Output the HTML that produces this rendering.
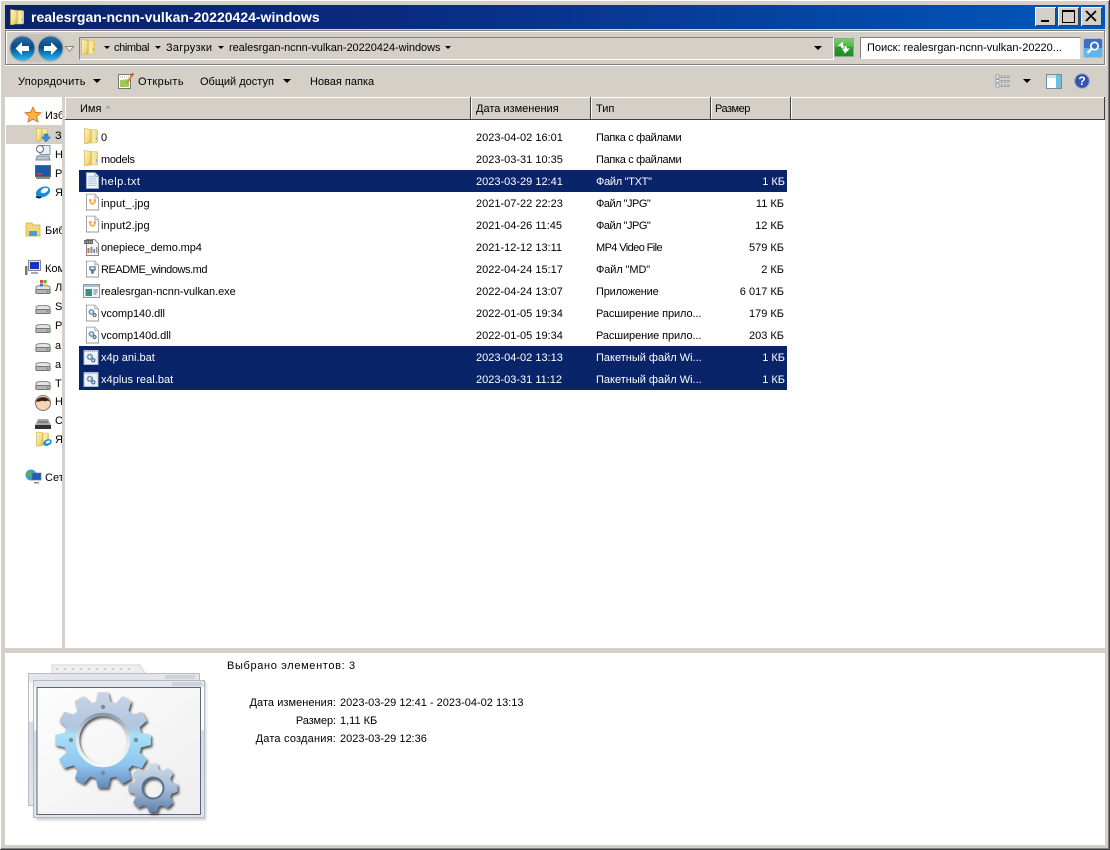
<!DOCTYPE html>
<html><head><meta charset="utf-8"><style>
html,body{margin:0;padding:0}
body{width:1110px;height:850px;overflow:hidden;position:relative;background:#d4d0c8;font:11px "Liberation Sans","Noto Sans CJK JP",sans-serif;color:#000}
.a{position:absolute;white-space:nowrap}
.t{position:absolute;white-space:nowrap;line-height:14px;height:14px;margin-top:1px}
.btn{position:absolute;top:7px;width:21px;height:19px;background:#d4d0c8;box-shadow:inset 1px 1px 0 #fff,inset -1px -1px 0 #404040}
.sel{position:absolute;left:79px;width:708px;height:22px;background:#0a246a}
.w{color:#fff}
.arr{position:absolute;width:0;height:0;border-left:4px solid transparent;border-right:4px solid transparent;border-top:4px solid #000}
.sep{position:absolute;top:97px;width:1px;height:22px;background:#404040;box-shadow:1px 0 0 #fff}
svg{position:absolute;overflow:visible}
</style></head><body>
<svg width="0" height="0" style="position:absolute"><defs>
<linearGradient id="fg" x1="0" y1="0" x2="1" y2="0"><stop offset="0" stop-color="#d8b548"/><stop offset="0.5" stop-color="#fbeeb0"/><stop offset="1" stop-color="#e8d070"/></linearGradient>
<linearGradient id="ff" x1="0" y1="0" x2="1" y2="1"><stop offset="0" stop-color="#fff4b8"/><stop offset="0.6" stop-color="#f1dc86"/><stop offset="1" stop-color="#d9b84e"/></linearGradient>
<linearGradient id="bg" x1="0" y1="0" x2="0" y2="1"><stop offset="0" stop-color="#2a6fa8"/><stop offset="0.45" stop-color="#0a4a85"/><stop offset="0.75" stop-color="#1488cf"/><stop offset="1" stop-color="#33bdf0"/></linearGradient>
<linearGradient id="gear" gradientUnits="userSpaceOnUse" x1="0" y1="52" x2="0" y2="150"><stop offset="0" stop-color="#c9d4e2"/><stop offset="0.36" stop-color="#afc6e0"/><stop offset="0.44" stop-color="#a6e0f6"/><stop offset="0.75" stop-color="#8fc4ee"/><stop offset="1" stop-color="#5f84b6"/></linearGradient>
<linearGradient id="gear2" gradientUnits="userSpaceOnUse" x1="0" y1="123" x2="0" y2="173"><stop offset="0" stop-color="#d2dbe6"/><stop offset="0.5" stop-color="#a6bcd6"/><stop offset="1" stop-color="#5e80aa"/></linearGradient>
<linearGradient id="ring" x1="0" y1="0" x2="0" y2="1"><stop offset="0" stop-color="#8d9aaa"/><stop offset="0.5" stop-color="#dfe8ee"/><stop offset="1" stop-color="#f4f8fa"/></linearGradient>
<linearGradient id="greenb" x1="0" y1="0" x2="0" y2="1"><stop offset="0" stop-color="#7ad070"/><stop offset="0.45" stop-color="#4cb546"/><stop offset="0.5" stop-color="#2c9a2c"/><stop offset="1" stop-color="#1f8a26"/></linearGradient>
<symbol id="folder" viewBox="0 0 14 16"><path d="M6 1.500h7l.7 1v11.500l-.7 1H5z" fill="url(#fg)" stroke="#d9c26a" stroke-width=".5"/><path d="M.5 .5l6.500 1v12.500l-4.500 2-2-.5z" fill="url(#ff)" stroke="#c9aa44" stroke-width=".6"/><path d="M12.500 9v3" stroke="#8ab4d8"/></symbol>
<symbol id="page" viewBox="0 0 16 18"><path d="M1.500 .5h9l4 4v13h-13z" fill="#fff" stroke="#999"/><path d="M10.500 .5v4h4" fill="#e5e5e5" stroke="#aaa"/></symbol>
<symbol id="txt" viewBox="0 0 16 18"><path d="M1.500 .5h9l4 4v13h-13z" fill="#f3f7fc" stroke="#8fa3bb"/><path d="M10.500 .5v4h4" fill="#d9e2ee" stroke="#8fa3bb"/><path d="M3.500 4.500h6M3.500 6.500h9M3.500 8.500h9M3.500 10.500h9M3.500 12.500h9M3.500 14.500h9" stroke="#a5bdd8"/></symbol>
<symbol id="jpg" viewBox="0 0 16 18"><use href="#page" width="16" height="18"/><path d="M4 7c1.500-1.500 2.500-.5 4 0 1.500-.5 2.500-1.500 4 0-.5 3-2.300 5-4 5s-3.500-2-4-5z" fill="#f4b04a"/><circle cx="8" cy="8.500" r="1.600" fill="#fff3d8"/><path d="M5 6l1 1M11 6l-1 1" stroke="#e2705c"/></symbol>
<symbol id="mp4" viewBox="0 0 16 18"><path d="M2.500 1.500h8l4 4v12h-12z" fill="#f4f4f4" stroke="#888"/><path d="M0 2h9v4H0z" fill="#666"/><path d="M1 4h1M3 4h1M5 4h1M7 4h1" stroke="#ddd"/><path d="M3.500 10h2v5h-2z" fill="#d66"/><path d="M6.500 9h2v6h-2z" fill="#6a6"/><path d="M9.500 11h1.500v4H9.500z" fill="#66c"/><path d="M12 9h1.500v6H12z" fill="#999"/></symbol>
<symbol id="md" viewBox="0 0 16 18"><use href="#page" width="16" height="18"/><path d="M4.500 6h7v4l-2 1.500v2l-1.500 1-1.500-1v-2l-2-1.500z" fill="#5f7f9c"/><rect x="6" y="7.200" width="4" height="2" fill="#dbe6f0"/></symbol>
<symbol id="exe" viewBox="0 0 17 14"><rect x=".5" y=".5" width="16" height="13" fill="#f4f7fa" stroke="#8a98a8"/><rect x="1" y="1" width="15" height="2" fill="#aebfd0"/><rect x="2.500" y="5" width="6.500" height="7" fill="#3f8f80"/><path d="M10.500 6h4M10.500 8h4M10.500 10h3" stroke="#5a7d9a"/><path d="M14 5v1" stroke="#6a8"/></symbol>
<symbol id="gears" viewBox="0 0 16 16"><circle cx="6.500" cy="6.500" r="3.100" fill="#dce8f2" stroke="#5f88b0" stroke-width="2.200" stroke-dasharray="2.300 .5"/><circle cx="11" cy="11" r="2.100" fill="#eef4f8" stroke="#4f7298" stroke-width="1.700"/></symbol>
<symbol id="dll" viewBox="0 0 16 18"><use href="#page" width="16" height="18"/><use href="#gears" x="2" y="3" width="12" height="12"/></symbol>
<symbol id="bat" viewBox="0 0 16 16"><rect x=".5" y=".5" width="15" height="15" fill="#eef2f7" stroke="#a8b8c8"/><path d="M1 1.500h14" stroke="#8898aa" stroke-dasharray="1 1"/><use href="#gears" x="1.500" y="2" width="13" height="13"/></symbol>
<symbol id="drive" viewBox="0 0 16 16"><path d="M1 6.500C1 5 3 4.500 8 4.500s7 .5 7 2V10H1z" fill="#e4e4e4" stroke="#888"/><rect x=".8" y="8.500" width="14.400" height="4" rx="1" fill="#b4b4b4" stroke="#777"/><rect x="11.500" y="9.500" width="2" height="2" fill="#58b04a"/></symbol>
</defs></svg>

<!-- outer frame -->
<div class="a" style="left:0;top:0;width:1110px;height:1px;background:#fff"></div>
<div class="a" style="left:0;top:0;width:1px;height:850px;background:#fff"></div>
<div class="a" style="left:1109px;top:0;width:1px;height:850px;background:#404040"></div>
<div class="a" style="left:0;top:849px;width:1110px;height:1px;background:#404040"></div>
<div class="a" style="left:1108px;top:1px;width:1px;height:848px;background:#808080"></div>
<div class="a" style="left:1px;top:848px;width:1108px;height:1px;background:#808080"></div>

<!-- title -->
<div class="a" style="left:5px;top:5px;width:1100px;height:24px;background:linear-gradient(90deg,#0a246a 0%,#0a2a80 35%,#0058bc 100%)"></div>
<svg style="left:10px;top:9px" width="14" height="16"><use href="#folder" width="14" height="16"/></svg>
<div class="t" style="left:31px;top:9px;color:#fff;font-weight:bold;font-size:14px;line-height:15px;height:15px">realesrgan-ncnn-vulkan-20220424-windows</div>
<div class="btn" style="left:1035px"><div class="a" style="left:6px;top:13px;width:8px;height:2px;background:#000"></div></div>
<div class="btn" style="left:1058px"><div class="a" style="left:4px;top:3px;width:11px;height:10px;border:1px solid #000;border-top-width:2px"></div></div>
<div class="btn" style="left:1081px"><svg style="left:5px;top:4px" width="11" height="11"><path d="M0 0l10 10M10 0L0 10" stroke="#000" stroke-width="1.700"/></svg></div>

<!-- nav bar -->
<div class="a" style="left:5px;top:30px;width:1098px;height:33px;border:1px solid #808080;box-shadow:inset 1px 1px 0 #fff,1px 1px 0 #fff"></div>
<div class="a" style="left:9px;top:34px;width:56px;height:28px;border-radius:14px;background:#c6c2ba"></div>
<svg style="left:9px;top:35px" width="27" height="27"><circle cx="13.500" cy="13.500" r="12.500" fill="url(#bg)" stroke="#a8adb3"/><path d="M13 7l-6.500 6.500 6.500 6.500v-4h7v-5h-7z" fill="#fff"/></svg>
<svg style="left:37px;top:35px" width="27" height="27"><circle cx="13.500" cy="13.500" r="12.500" fill="url(#bg)" stroke="#a8adb3"/><path d="M14 7l6.500 6.500L14 20v-4H7v-5h7z" fill="#fff"/></svg>
<svg style="left:65px;top:46px" width="10" height="7"><path d="M.5 .5h8L4.500 5.500z" fill="#f2f2f2" stroke="#888"/></svg>
<div class="a" style="left:79px;top:37px;width:753px;height:21px;border:1px solid #808080;border-right-color:#fff;border-bottom-color:#fff"></div>
<svg style="left:81px;top:39px" width="14" height="16"><use href="#folder" width="14" height="16"/></svg>
<div class="arr" style="left:104px;top:46px;border-width:3px 3px 0"></div>
<div class="t" style="left:114px;top:40px;letter-spacing:-.4px">chimbal</div>
<div class="arr" style="left:155px;top:46px;border-width:3px 3px 0"></div>
<div class="t" style="left:166px;top:40px;letter-spacing:.25px">Загрузки</div>
<div class="arr" style="left:218px;top:46px;border-width:3px 3px 0"></div>
<div class="t" style="left:229px;top:40px;letter-spacing:-.05px">realesrgan-ncnn-vulkan-20220424-windows</div>
<div class="arr" style="left:445px;top:46px;border-width:3px 3px 0"></div>
<div class="arr" style="left:814px;top:46px"></div>
<svg style="left:834px;top:38px" width="20" height="19"><rect x=".5" y=".5" width="19" height="18" fill="url(#greenb)" stroke="#8aa88a"/><path d="M9 3.500L3.500 8H7v1.500c1 .5 2 .5 3 0V8h-1zM11 15.500l5-5h-3.200V8.500l-2.300-.5v2.500H8z" fill="#fff"/></svg>
<div class="a" style="left:860px;top:37px;width:219px;height:20px;background:#fff;border:1px solid #808080;border-right-color:#d4d0c8;border-bottom-color:#fff"></div>
<div class="t" style="left:867px;top:40px">Поиск: realesrgan-ncnn-vulkan-20220...</div>
<svg style="left:1083px;top:38px" width="20" height="20"><rect x=".5" y=".5" width="19" height="19" rx="2" fill="#3c70c8" stroke="#b0bdd0"/><rect x="1" y="10" width="18" height="9" fill="#62b4ea"/><circle cx="11.500" cy="8" r="3.700" fill="#3c70c8" stroke="#fff" stroke-width="1.700"/><path d="M8.500 11l-4 4" stroke="#fff" stroke-width="2.200"/></svg>

<!-- toolbar -->
<div class="a" style="left:5px;top:65px;width:1100px;height:1px;background:#fff"></div>
<div class="t" style="left:18px;top:74px;letter-spacing:.2px">Упорядочить</div>
<div class="arr" style="left:93px;top:79px"></div>
<svg style="left:117px;top:72px" width="18" height="18"><path d="M1.500 2.500h12v14h-12z" fill="#fff" stroke="#777"/><path d="M3 8l9-1v8H3z" fill="#9ccb58"/><path d="M3 5h9" stroke="#a0a0a0" stroke-dasharray="1 1"/><path d="M10 11l6-9" stroke="#d98a1e" stroke-width="2"/><path d="M15 3l1-1.500" stroke="#c02020" stroke-width="2"/></svg>
<div class="t" style="left:138px;top:74px;letter-spacing:.4px">Открыть</div>
<div class="t" style="left:200px;top:74px">Общий доступ</div>
<div class="arr" style="left:283px;top:79px"></div>
<div class="t" style="left:310px;top:74px">Новая папка</div>
<svg style="left:995px;top:74px" width="16" height="14"><path d="M1 1h3v3H1zM1 5.500h3v3H1zM1 10h3v3H1z" fill="#fff" stroke="#7d8da0" stroke-width=".8"/><path d="M5.500 2h10M5.500 3.500h10M5.500 6.500h10M5.500 8h10M5.500 11h10M5.500 12.500h10" stroke="#7f8a9c" stroke-width=".8" stroke-dasharray="2.500 .8"/></svg>
<div class="arr" style="left:1023px;top:79px"></div>
<svg style="left:1046px;top:74px" width="16" height="15"><rect x=".5" y=".5" width="15" height="14" fill="#fff" stroke="#6f8ca8"/><rect x="1" y="1" width="14" height="3" fill="#cfe0ee"/><rect x="10" y="1" width="5" height="13" fill="#6cc0dc"/></svg>
<svg style="left:1074px;top:73px" width="16" height="16"><circle cx="8" cy="8" r="7.300" fill="#2f55b0" stroke="#9aa6b8"/><text x="8" y="12" text-anchor="middle" font-family="Liberation Sans" font-size="12" font-weight="bold" fill="#fff">?</text></svg>

<!-- nav pane -->
<div class="a" style="left:5px;top:97px;width:57px;height:551px;background:#fff;overflow:hidden">
  <div class="a" style="left:1px;top:28px;width:56px;height:19px;background:#d4d0c8"></div>
  <svg style="left:20px;top:10px" width="16" height="16"><path d="M8 0l2.300 5.200 5.700.6-4.300 3.700 1.300 5.500L8 12.100 3 15l1.300-5.500L0 5.800l5.700-.6z" fill="#f6b73c" stroke="#d9672a" stroke-width=".8"/></svg>
  <div class="t" style="left:40px;top:11px">Избранное</div>
  <svg style="left:31px;top:30px" width="16" height="17"><use href="#folder" width="12" height="15"/><path d="M8 7h4v3h2.500L10 15 5.500 10H8z" fill="#3b8fd8" stroke="#1d5fa8" stroke-width=".5"/></svg>
  <div class="t" style="left:50px;top:31px">Загрузки</div>
  <svg style="left:30px;top:48px" width="16" height="16"><rect x="5" y=".5" width="10" height="9" fill="#e8eef4" stroke="#8796a6"/><circle cx="5" cy="4" r="3.500" fill="#fff" stroke="#667"/><path d="M2 11h12l1 4H1z" fill="#b9c6d2" stroke="#7d8a98"/></svg>
  <div class="t" style="left:50px;top:50px">Недавние места</div>
  <svg style="left:30px;top:67px" width="16" height="16"><rect x=".5" y="1.500" width="15" height="11" fill="#1c5aa8" stroke="#666"/><rect x="2" y="9" width="5" height="2" fill="#d33"/><rect x="1" y="13" width="14" height="2" fill="#8b8b8b"/></svg>
  <div class="t" style="left:50px;top:69px">Рабочий стол</div>
  <svg style="left:30px;top:87px" width="16" height="16"><ellipse cx="8" cy="8" rx="7.500" ry="5" transform="rotate(-25 8 8)" fill="#1b8be0"/><ellipse cx="9.500" cy="6.500" rx="4" ry="2.300" transform="rotate(-25 9.500 6.500)" fill="#fff"/><path d="M1 12.500q3 2 5 .5" stroke="#111" stroke-width="1.500" fill="none"/></svg>
  <div class="t" style="left:50px;top:88px">Яндекс.Диск</div>
  <svg style="left:20px;top:125px" width="17" height="16"><path d="M1 1h6l1 2h7v11H1z" fill="#f2d878" stroke="#c9a93a" stroke-width=".7"/><path d="M4 14V9h8v5z" fill="#4f9bd8"/></svg>
  <div class="t" style="left:40px;top:126px">Библиотеки</div>
  <svg style="left:20px;top:163px" width="16" height="16"><rect x="3.500" y=".5" width="12" height="10" fill="#e8e8ee" stroke="#888"/><rect x="5" y="2" width="9" height="7" fill="#1536b8"/><rect x="0" y="6" width="2.500" height="9" fill="#777"/><path d="M6 12h7v2H6z" fill="#aaa"/></svg>
  <div class="t" style="left:40px;top:164px">Компьютер</div>
  <svg style="left:30px;top:182px" width="16" height="16"><use href="#drive" width="16" height="16" y="2"/><path d="M5 1h3v3H5z" fill="#e04a2a"/><path d="M8.500 1h3v3h-3z" fill="#5aab3a"/><path d="M5 4.500h3v3H5z" fill="#3a78d8"/><path d="M8.500 4.500h3v3h-3z" fill="#f0c030"/></svg>
  <div class="t" style="left:50px;top:183px">Локальный</div>
  <svg style="left:30px;top:204px" width="16" height="16"><use href="#drive" width="16" height="16"/></svg>
  <div class="t" style="left:50px;top:202px">S</div>
  <svg style="left:30px;top:223px" width="16" height="16"><use href="#drive" width="16" height="16"/></svg>
  <div class="t" style="left:50px;top:221px">Р</div>
  <svg style="left:30px;top:242px" width="16" height="16"><use href="#drive" width="16" height="16"/></svg>
  <div class="t" style="left:50px;top:241px">а</div>
  <svg style="left:30px;top:261px" width="16" height="16"><use href="#drive" width="16" height="16"/></svg>
  <div class="t" style="left:50px;top:260px">а</div>
  <svg style="left:30px;top:280px" width="16" height="16"><use href="#drive" width="16" height="16"/></svg>
  <div class="t" style="left:50px;top:279px">Т</div>
  <svg style="left:30px;top:298px" width="16" height="16"><circle cx="8" cy="8" r="7.500" fill="#f5d7b5" stroke="#777"/><path d="M1 7C2 1 13 0 15 7c-2-2-3-1-4-1-2 1-3-1-5 0-2 1-3 0-5 1z" fill="#3a1f14"/></svg>
  <div class="t" style="left:50px;top:297px">Н</div>
  <svg style="left:30px;top:317px" width="16" height="16"><path d="M3 5h10l3 6v4H0v-4z" fill="#aaa"/><path d="M0 11h16v4H0z" fill="#333"/><path d="M3 8h10" stroke="#555"/></svg>
  <div class="t" style="left:50px;top:316px">С</div>
  <svg style="left:31px;top:334px" width="17" height="17"><use href="#folder" width="13" height="16"/><ellipse cx="11.500" cy="11.500" rx="4.500" ry="3" transform="rotate(-25 11.500 11.500)" fill="#1b8be0"/><ellipse cx="12" cy="11" rx="2.300" ry="1.200" transform="rotate(-25 12 11)" fill="#fff"/></svg>
  <div class="t" style="left:50px;top:335px">Я</div>
  <svg style="left:20px;top:372px" width="17" height="16"><circle cx="6" cy="6" r="5.500" fill="#3aa0d8"/><path d="M2 3q3-2 4 1t-3 4z" fill="#5ab04a"/><rect x="7" y="4" width="9" height="7" fill="#1f5ec0" stroke="#777" stroke-width=".7"/><path d="M9 13h5v1.500H9z" fill="#888"/></svg>
  <div class="t" style="left:40px;top:373px">Сеть</div>
</div>

<!-- header -->
<div class="a" style="left:65px;top:97px;width:1040px;height:1px;background:#fff"></div>
<div class="a" style="left:65px;top:97px;width:1px;height:22px;background:#fff"></div>
<div class="a" style="left:65px;top:119px;width:1040px;height:1px;background:#404040"></div>
<div class="a" style="left:1104px;top:97px;width:1px;height:23px;background:#404040"></div>
<div class="sep" style="left:470px"></div><div class="sep" style="left:590px"></div><div class="sep" style="left:710px"></div><div class="sep" style="left:790px"></div>
<div class="t" style="left:80px;top:101px">Имя</div>
<svg style="left:105px;top:105px" width="6" height="4"><path d="M0 3.500L3 0l3 3.500z" fill="#a8a8a8"/></svg>
<div class="t" style="left:476px;top:101px">Дата изменения</div>
<div class="t" style="left:596px;top:101px">Тип</div>
<div class="t" style="left:715px;top:101px;letter-spacing:-.5px">Размер</div>

<!-- list -->
<div class="a" style="left:65px;top:120px;width:1040px;height:528px;background:#fff"></div>
<div class="sel" style="top:170px"></div>
<div class="sel" style="top:346px;height:44px"></div>

<svg style="left:84px;top:128px" width="14" height="16"><use href="#folder" width="14" height="16"/></svg>
<div class="t" style="left:101px;top:130px">0</div><div class="t" style="left:476px;top:130px">2023-04-02 16:01</div><div class="t" style="left:596px;top:130px;letter-spacing:-.33px">Папка с файлами</div>

<svg style="left:84px;top:150px" width="14" height="16"><use href="#folder" width="14" height="16"/></svg>
<div class="t" style="left:101px;top:152px;letter-spacing:-.3px">models</div><div class="t" style="left:476px;top:152px">2023-03-31 10:35</div><div class="t" style="left:596px;top:152px;letter-spacing:-.33px">Папка с файлами</div>

<svg style="left:85px;top:171px" width="15" height="19"><use href="#txt" width="15" height="19"/></svg>
<div class="t w" style="left:101px;top:174px;letter-spacing:.5px">help.txt</div><div class="t w" style="left:476px;top:174px">2023-03-29 12:41</div><div class="t w" style="left:596px;top:174px;letter-spacing:-.3px">Файл "TXT"</div><div class="t w" style="left:685px;width:100px;text-align:right;top:174px">1 КБ</div>

<svg style="left:85px;top:193px" width="15" height="18"><use href="#jpg" width="15" height="18"/></svg>
<div class="t" style="left:101px;top:196px;letter-spacing:.1px">input_.jpg</div><div class="t" style="left:476px;top:196px">2021-07-22 22:23</div><div class="t" style="left:596px;top:196px;letter-spacing:-.5px">Файл "JPG"</div><div class="t" style="left:684px;width:100px;text-align:right;top:196px">11 КБ</div>

<svg style="left:85px;top:215px" width="15" height="18"><use href="#jpg" width="15" height="18"/></svg>
<div class="t" style="left:101px;top:218px;letter-spacing:.1px">input2.jpg</div><div class="t" style="left:476px;top:218px">2021-04-26 11:45</div><div class="t" style="left:596px;top:218px;letter-spacing:-.5px">Файл "JPG"</div><div class="t" style="left:684px;width:100px;text-align:right;top:218px">12 КБ</div>

<svg style="left:84px;top:238px" width="16" height="18"><use href="#mp4" width="16" height="18"/></svg>
<div class="t" style="left:101px;top:240px;letter-spacing:-.12px">onepiece_demo.mp4</div><div class="t" style="left:476px;top:240px">2021-12-12 13:11</div><div class="t" style="left:596px;top:240px;letter-spacing:-.6px">MP4 Video File</div><div class="t" style="left:684px;width:100px;text-align:right;top:240px">579 КБ</div>

<svg style="left:85px;top:260px" width="15" height="18"><use href="#md" width="15" height="18"/></svg>
<div class="t" style="left:101px;top:262px;letter-spacing:-.45px">README_windows.md</div><div class="t" style="left:476px;top:262px">2022-04-24 15:17</div><div class="t" style="left:596px;top:262px;letter-spacing:-.1px">Файл "MD"</div><div class="t" style="left:684px;width:100px;text-align:right;top:262px">2 КБ</div>

<svg style="left:83px;top:284px" width="17" height="14"><use href="#exe" width="17" height="14"/></svg>
<div class="t" style="left:101px;top:284px;letter-spacing:-.04px">realesrgan-ncnn-vulkan.exe</div><div class="t" style="left:476px;top:284px">2022-04-24 13:07</div><div class="t" style="left:596px;top:284px;letter-spacing:-.2px">Приложение</div><div class="t" style="left:684px;width:100px;text-align:right;top:284px">6 017 КБ</div>

<svg style="left:85px;top:304px" width="15" height="18"><use href="#dll" width="15" height="18"/></svg>
<div class="t" style="left:101px;top:306px;letter-spacing:-.08px">vcomp140.dll</div><div class="t" style="left:476px;top:306px">2022-01-05 19:34</div><div class="t" style="left:596px;top:306px;letter-spacing:-.1px">Расширение прило...</div><div class="t" style="left:684px;width:100px;text-align:right;top:306px">179 КБ</div>

<svg style="left:85px;top:326px" width="15" height="18"><use href="#dll" width="15" height="18"/></svg>
<div class="t" style="left:101px;top:328px;letter-spacing:-.08px">vcomp140d.dll</div><div class="t" style="left:476px;top:328px">2022-01-05 19:34</div><div class="t" style="left:596px;top:328px;letter-spacing:-.1px">Расширение прило...</div><div class="t" style="left:684px;width:100px;text-align:right;top:328px">203 КБ</div>

<svg style="left:83px;top:350px" width="16" height="15"><use href="#bat" width="16" height="15"/></svg>
<div class="t w" style="left:101px;top:350px">x4p ani.bat</div><div class="t w" style="left:476px;top:350px">2023-04-02 13:13</div><div class="t w" style="left:596px;top:350px">Пакетный файл Wi...</div><div class="t w" style="left:685px;width:100px;text-align:right;top:350px">1 КБ</div>

<svg style="left:83px;top:372px" width="16" height="15"><use href="#bat" width="16" height="15"/></svg>
<div class="t w" style="left:101px;top:372px;letter-spacing:.05px">x4plus real.bat</div><div class="t w" style="left:476px;top:372px">2023-03-31 11:12</div><div class="t w" style="left:596px;top:372px">Пакетный файл Wi...</div><div class="t w" style="left:685px;width:100px;text-align:right;top:372px">1 КБ</div>

<!-- details -->
<div class="a" style="left:5px;top:653px;width:1100px;height:192px;background:#fff"></div>
<svg style="left:0;top:640px" width="240" height="210">
  <defs>
    <filter id="sh" x="-20%" y="-20%" width="140%" height="140%"><feGaussianBlur stdDeviation="1.200"/></filter>
    <filter id="ds" x="-20%" y="-20%" width="140%" height="140%"><feDropShadow dx="1.500" dy="2" stdDeviation="1.300" flood-color="#111" flood-opacity=".75"/></filter>
    <linearGradient id="strip" x1="0" y1="0" x2="0" y2="1"><stop offset="0" stop-color="#fafafa"/><stop offset=".36" stop-color="#fafafa"/><stop offset=".37" stop-color="#d4dce6"/><stop offset="1" stop-color="#dfe5ec"/></linearGradient>
    <linearGradient id="pane" x1="0" y1="0" x2="1" y2="1"><stop offset="0" stop-color="#fdfdfd"/><stop offset="1" stop-color="#eeeeee"/></linearGradient>
    <mask id="m1" maskUnits="userSpaceOnUse" x="40" y="40" width="130" height="120">
      <g fill="#fff" stroke="#fff" stroke-width="1.500" stroke-linejoin="round">
        <circle cx="103" cy="100" r="38"/>
        <polygon id="tooth" points="98.500,53 107.500,53 110,64 96,64"/>
        <polygon points="98.500,53 107.500,53 110,64 96,64" transform="rotate(30 103 100)"/>
        <polygon points="98.500,53 107.500,53 110,64 96,64" transform="rotate(60 103 100)"/>
        <polygon points="98.500,53 107.500,53 110,64 96,64" transform="rotate(90 103 100)"/>
        <polygon points="98.500,53 107.500,53 110,64 96,64" transform="rotate(120 103 100)"/>
        <polygon points="98.500,53 107.500,53 110,64 96,64" transform="rotate(150 103 100)"/>
        <polygon points="98.500,53 107.500,53 110,64 96,64" transform="rotate(180 103 100)"/>
        <polygon points="98.500,53 107.500,53 110,64 96,64" transform="rotate(210 103 100)"/>
        <polygon points="98.500,53 107.500,53 110,64 96,64" transform="rotate(240 103 100)"/>
        <polygon points="98.500,53 107.500,53 110,64 96,64" transform="rotate(270 103 100)"/>
        <polygon points="98.500,53 107.500,53 110,64 96,64" transform="rotate(300 103 100)"/>
        <polygon points="98.500,53 107.500,53 110,64 96,64" transform="rotate(330 103 100)"/>
      </g>
      <circle cx="103" cy="100" r="24" fill="#000"/>
    </mask>
    <mask id="m2" maskUnits="userSpaceOnUse" x="120" y="115" width="70" height="70">
      <g fill="#fff" stroke="#fff" stroke-linejoin="round">
        <circle cx="153" cy="148" r="19"/>
        <polygon points="149.500,124 156.500,124 159,132 147,132"/>
        <polygon points="149.500,124 156.500,124 159,132 147,132" transform="rotate(45 153 148)"/>
        <polygon points="149.500,124 156.500,124 159,132 147,132" transform="rotate(90 153 148)"/>
        <polygon points="149.500,124 156.500,124 159,132 147,132" transform="rotate(135 153 148)"/>
        <polygon points="149.500,124 156.500,124 159,132 147,132" transform="rotate(180 153 148)"/>
        <polygon points="149.500,124 156.500,124 159,132 147,132" transform="rotate(225 153 148)"/>
        <polygon points="149.500,124 156.500,124 159,132 147,132" transform="rotate(270 153 148)"/>
        <polygon points="149.500,124 156.500,124 159,132 147,132" transform="rotate(315 153 148)"/>
      </g>
      <circle cx="153" cy="148" r="10" fill="#000"/>
    </mask>
  </defs>
  <path d="M52 25h88l5 8v4H52z" fill="#eceef0" stroke="#d4d6d8"/>
  <path d="M56 29h80" stroke="#a8aaac" stroke-dasharray="2 6"/>
  <rect x="28.500" y="33.500" width="171" height="132" fill="url(#strip)" stroke="#b8bdc4"/>
  <rect x="29" y="34" width="170" height="8" fill="#e2e5ea"/>
  <rect x="36" y="42" width="170" height="138" fill="#8c9096" opacity=".45" filter="url(#sh)"/>
  <rect x="33.500" y="40.500" width="171" height="137" fill="url(#strip)" stroke="#b4bac0"/>
  <rect x="34" y="41" width="170" height="6" fill="#e2e6ea"/>
  <rect x="37" y="47.500" width="163.500" height="127" fill="url(#pane)" stroke="#5a6478"/>
  <path d="M165 35h30v4h-30zM172 42h30v4h-30z" fill="#cfd4da"/>
  <g filter="url(#ds)"><rect x="40" y="40" width="130" height="120" fill="url(#gear)" mask="url(#m1)"/></g>
  <circle cx="103" cy="100" r="25.500" fill="none" stroke="url(#ring)" stroke-width="3.500"/>
  <circle cx="103" cy="67" r="2.200" fill="#7a8a9a"/><circle cx="103" cy="133" r="2.200" fill="#7a8a9a"/><circle cx="71" cy="100" r="2.200" fill="#7a8a9a"/><circle cx="136" cy="100" r="2.200" fill="#7a8a9a"/>
  <g filter="url(#ds)"><rect x="120" y="115" width="70" height="70" fill="url(#gear2)" mask="url(#m2)"/></g>
  <circle cx="153" cy="148" r="10.500" fill="none" stroke="#5a7390" stroke-width="2"/>
</svg>
<div class="t" style="left:227px;top:658px;letter-spacing:.65px">Выбрано элементов: 3</div>
<div class="t" style="left:236px;width:100px;text-align:right;top:695px;letter-spacing:.05px">Дата изменения:</div>
<div class="t" style="left:340px;top:695px">2023-03-29 12:41 - 2023-04-02 13:13</div>
<div class="t" style="left:236px;width:100px;text-align:right;top:713px;letter-spacing:-.1px">Размер:</div>
<div class="t" style="left:340px;top:713px">1,11 КБ</div>
<div class="t" style="left:236px;width:100px;text-align:right;top:731px;letter-spacing:.2px">Дата создания:</div>
<div class="t" style="left:340px;top:731px">2023-03-29 12:36</div>
</body></html>
